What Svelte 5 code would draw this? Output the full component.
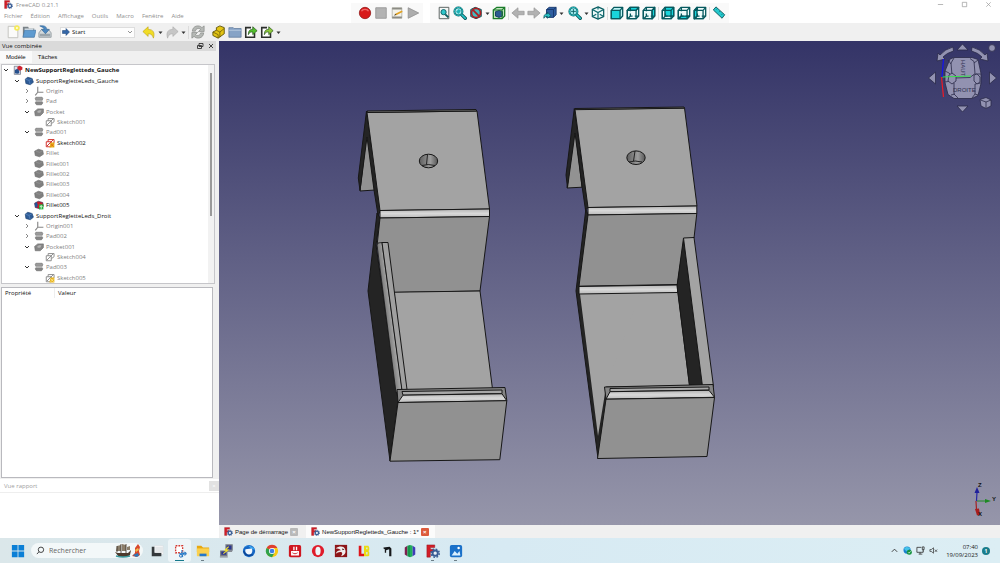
<script>
  const menus = ['Fichier', 'Édition', 'Affichage', 'Outils', 'Macro', 'Fenêtre', 'Aide'];

  const tree = [
    { level: 0, label: 'NewSupportRegletteds_Gauche', icon: 'doc', open: true, tone: 'bold' },
    { level: 1, label: 'SupportRegletteLeds_Gauche', icon: 'body', open: true, tone: 'on' },
    { level: 2, label: 'Origin', icon: 'origin', open: false },
    { level: 2, label: 'Pad', icon: 'pad', open: false },
    { level: 2, label: 'Pocket', icon: 'pocket', open: true },
    { level: 3, label: 'Sketch001', icon: 'sketch' },
    { level: 2, label: 'Pad001', icon: 'pad', open: true },
    { level: 3, label: 'Sketch002', icon: 'sketchRed', tone: 'on' },
    { level: 2, label: 'Fillet', icon: 'fillet' },
    { level: 2, label: 'Fillet001', icon: 'fillet' },
    { level: 2, label: 'Fillet002', icon: 'fillet' },
    { level: 2, label: 'Fillet003', icon: 'fillet' },
    { level: 2, label: 'Fillet004', icon: 'fillet' },
    { level: 2, label: 'Fillet005', icon: 'filletTip', tone: 'on' },
    { level: 1, label: 'SupportRegletteLeds_Droit', icon: 'body', open: true, tone: 'on' },
    { level: 2, label: 'Origin001', icon: 'origin', open: false },
    { level: 2, label: 'Pad002', icon: 'pad', open: false },
    { level: 2, label: 'Pocket001', icon: 'pocket', open: true },
    { level: 3, label: 'Sketch004', icon: 'sketch' },
    { level: 2, label: 'Pad003', icon: 'pad', open: true },
    { level: 3, label: 'Sketch005', icon: 'sketchWarn' }
  ];

  const macroTools = [
    ['record', 'Enregistrer la macro'],
    ['stop', 'Arrêter'],
    ['macroEdit', 'Macros'],
    ['play', 'Exécuter la macro']
  ];

  const viewTools = [
    ['fitAll', 'Tout afficher'], ['fitSel', 'Afficher la sélection'], ['drawStyle', 'Style de représentation'], ['caret'],
    ['bbox', 'Boîte englobante'], ['sep'], ['back', 'Précédent'], ['forward', 'Suivant'],
    ['link', 'Aller à l’objet lié'], ['caret'], ['gap'], ['zoom', 'Zoom'], ['caret'],
    ['iso', 'Isométrique'], ['sep'],
    ['front', 'Face'], ['top', 'Dessus'], ['right', 'Droite'], ['sep'],
    ['rear', 'Arrière'], ['bottom', 'Dessous'], ['left', 'Gauche'], ['sep'], ['measure', 'Mesurer']
  ];

  const apps = [
    ['taskview', 'Vue des tâches'], ['snip', 'Capture'], ['files', 'Explorateur'], ['putty', 'PuTTY'],
    ['thunderbird', 'Thunderbird'], ['chrome', 'Chrome'], ['redapp', 'Disque'], ['opera', 'Opera'],
    ['dragon', 'Dragon'], ['l8', 'LB'], ['hook', 'Cura'], ['hex', 'Anneaux'],
    ['freecad', 'FreeCAD'], ['photos', 'Photos']
  ];
</script>

{#snippet cube(kind)}
  <g fill="none" stroke="#075a5f" stroke-width="1.500" stroke-linejoin="round">
    {#if kind === 'front'}
      <path d="M1.500 5l3-3.500h10v10l-3 3h-10z" fill="#b9f2f3" />
      <path d="M1.500 5h10v9.500h-10z" fill="#19d5dc" />
      <path d="M11.500 5l3-3.500" />
    {:else}
      <path d="M1.500 5l3-3.500h10v10l-3 3h-10z" fill="#effbfb" />
      {#if kind === 'top'}<path d="M1.500 5l3-3.500h10l-3 3.500z" fill="#19d5dc" />{/if}
      {#if kind === 'right'}<path d="M11.500 5l3-3.500v10l-3 3z" fill="#19d5dc" />{/if}
      {#if kind === 'rear'}<path d="M4.500 1.500h10v10h-10z" fill="#19d5dc" />{/if}
      {#if kind === 'bottom'}<path d="M1.500 14.500l3-3h10l-3 3z" fill="#19d5dc" />{/if}
      {#if kind === 'left'}<path d="M1.500 5l3-3.500v10l-3 3z" fill="#19d5dc" />{/if}
      <path d="M1.500 5h10v9.500h-10zM11.500 5l3-3.500M5 2v4M5 8.500v3h2.500M10 11.500h4M5 11.500l-3 3" />
    {/if}
  </g>
{/snippet}

{#snippet lens()}
  <path d="M9.500 9.500l4.500 4.500" stroke="#0b5558" stroke-width="3.800" stroke-linecap="round" />
  <path d="M9.500 9.500l4.500 4.500" stroke="#28c5c9" stroke-width="2" stroke-linecap="round" />
  <circle cx="6.200" cy="6.200" r="4.600" fill="#9fe9ec" stroke="#0b6165" stroke-width="2.200" />
  <circle cx="6.200" cy="6.200" r="4.600" fill="none" stroke="#2cc3c7" stroke-width="1" />
{/snippet}

{#snippet icon(name)}
  <svg class="ico" viewBox="0 0 16 16" fill="none" aria-hidden="true">
    {#if name === 'freecad'}
      <path d="M1 1h9v3H5v2h4v3H5v6H1z" fill="#d21d27" stroke="#8e1119" stroke-width=".5" />
      <circle cx="10.500" cy="10.500" r="3" fill="#e9eef5" stroke="#3a5d95" stroke-width="2.200" />
      <circle cx="10.500" cy="10.500" r="4.700" stroke="#3a5d95" stroke-width="1.600" stroke-dasharray="2 1.690" />
    {:else if name === 'new'}
      <path d="M2.500 1.500h11v13h-11z" fill="#fbfbfa" stroke="#b9b9b4" stroke-width=".9" />
      <circle cx="12.500" cy="3.500" r="3.200" fill="#f5ea5b" />
      <circle cx="12.500" cy="3.500" r="1.200" fill="#fffde0" />
    {:else if name === 'open'}
      <path d="M1 2h6l1 2h6v10H1z" fill="#7a8288" />
      <path d="M3 4h10v6H3z" fill="#dfe6ea" />
      <path d="M1 14L3 6h13l-2 8z" fill="#5f9bd0" stroke="#3e73a5" stroke-width=".7" />
    {:else if name === 'save'}
      <path d="M1 9l3-4h8l3 4v5H1z" fill="#d4d9dc" stroke="#7c868c" stroke-width=".8" />
      <path d="M2 10h12v3H2z" fill="#9aa4ab" />
      <path d="M2 1c5-1 8 1 8 4h3L8.500 10 4 5h3C7 3 4 2 2 1z" fill="#4c87bf" stroke="#285e92" stroke-width=".6" />
    {:else if name === 'start'}
      <path d="M1 5h7V1l7 7-7 7v-4H1z" fill="#3467a8" stroke="#173f70" />
    {:else if name === 'undo'}
      <path d="M7 2v3c6 0 8 4 6 10-1-4-3-5-6-5v3L1 7.500z" fill="#f1dc25" stroke="#bda30f" stroke-width=".7" />
    {:else if name === 'redo'}
      <path d="M9 2v3C3 5 1 9 3 15c1-4 3-5 6-5v3l6-5.500z" fill="#c6c6c6" stroke="#a9a9a9" stroke-width=".7" />
    {:else if name === 'refresh'}
      <path d="M1.500 7C2 .5 9.500-.5 12.500 3L15 1v6.500H8.500L11 5C9 3 5.500 4 5 7z" fill="#b5b8b5" stroke="#868986" stroke-width=".8" />
      <path d="M14.500 9c-.5 6.500-8 7.500-11 4L1 15V8.500h6.500L5 11c2 2 5.500 1 6-2z" fill="#b5b8b5" stroke="#868986" stroke-width=".8" />
    {:else if name === 'part'}
      <path d="M1 8l4-2V3l4-2 5 2v7l-7 5-6-3z" fill="#e3c414" stroke="#5e5208" />
      <path d="M5 6l4 2v6M9 8l5-4M1 8l6 3v4" stroke="#5e5208" stroke-width=".8" />
    {:else if name === 'group'}
      <path d="M1 3h5l1 1h8v10H1z" fill="#86a3c6" stroke="#5a7699" stroke-width=".8" />
      <path d="M1 6h14" stroke="#b9cbe0" />
    {:else if name === 'export' || name === 'export2'}
      <path d="M8 3H2v11h10V9" fill="#fff" stroke="#2c2f2c" stroke-width="1.800" />
      <path d="M5 11c0-5 2-6 5-6V2l5 4.500L10 11V8c-2 0-4 0-5 3z" fill={name === 'export' ? '#52bf2c' : '#8fc93c'} stroke="#25511a" stroke-width=".8" />
    {:else if name === 'record'}
      <circle cx="8" cy="8" r="6.500" fill="#d81a1a" stroke="#8a0b0b" stroke-width=".8" />
      <path d="M4 6c1-3 7-3 8 0" stroke="#ee6a6a" stroke-width="1.400" />
    {:else if name === 'stop'}
      <path d="M2 2h12v12H2z" fill="#b3b3b3" stroke="#989898" />
    {:else if name === 'macroEdit'}
      <path d="M2.500 2h11v12h-11z" fill="#f3f2ea" stroke="#a6a69c" stroke-width=".8" />
      <path d="M2.500 2h11v2h-11zM2.500 12h11v2h-11z" fill="#8b8b84" />
      <path d="M6 10l8-4" stroke="#e3a220" stroke-width="2" /><path d="M5 10.500l2-1" stroke="#333" />
    {:else if name === 'play'}
      <path d="M2.500 2l12 6-12 6z" fill="#adadad" stroke="#949494" />
    {:else if name === 'fitAll'}
      <path d="M2.500 1.500h11v13h-11z" fill="#f4f6f5" stroke="#4b5451" />
      <circle cx="7.500" cy="7" r="3" fill="#2fc6ca" stroke="#0a5b60" /><path d="M9.500 9.500l3.500 3.500" stroke="#0a5b60" stroke-width="2.200" />
    {:else if name === 'fitSel' || name === 'zoom'}
      {@render lens()}
      {#if name === 'fitSel'}<path d="M3.500 6.500l3-3 2.500 2-2.500 3.500z" fill="#20b2b7" />{:else}<path d="M3.500 6.200h5.500M6.200 3.500V9" stroke="#0b6165" />{/if}
    {:else if name === 'drawStyle'}
      <path d="M2 4l5-2.500L14 4v8l-6 2.500L2 12z" fill="#41bcc0" stroke="#083f42" />
      <circle cx="8" cy="8" r="5.200" stroke="#b01e22" stroke-width="2" /><path d="M4.500 4.500l7 7" stroke="#b01e22" stroke-width="2" />
    {:else if name === 'bbox'}
      <path d="M1.500 4.500l4-3h9v10l-3 3h-10z" fill="#bfe3bb" stroke="#1b7c2a" stroke-width="1.500" />
      <path d="M4 6.500L8 5l4 1.500v5L8 13l-4-1.500z" fill="#2b5b92" stroke="#10325b" /><path d="M11.500 5v9M2 4.500h9.500l3-3" stroke="#1b7c2a" stroke-width="1.200" />
    {:else if name === 'back'}
      <path d="M15 6v4H8v4L1 8l7-6v4z" fill="#b2b2b2" stroke="#979797" stroke-width=".8" />
    {:else if name === 'forward'}
      <path d="M1 6v4h7v4l7-6-7-6v4z" fill="#b2b2b2" stroke="#979797" stroke-width=".8" />
    {:else if name === 'link'}
      <path d="M4 4l3-2.500h8V10l-3 3H4z" fill="#2f5da0" stroke="#15366b" /><path d="M4 4h8v9M12 4l3-2.500" stroke="#15366b" />
      <path d="M1 14c0-4 1-5 4-5V7l4 4-4 3v-2c-2 0-3 0-4 2z" fill="#27bec3" stroke="#075055" stroke-width=".8" />
    {:else if name === 'iso'}
      <path d="M8 1l6.500 3v8L8 15l-6.500-3V4z" fill="#eefafa" stroke="#075a5f" stroke-width="1.400" />
      <path d="M1.500 4L8 7.500 14.500 4M8 1v3M8 7v8M1.500 12L6 9.500M14.500 12L10 9.500" stroke="#0c6b70" stroke-width="1.400" />
    {:else if name === 'measure'}
      <path d="M1.500 4.500l3-3.500 10 9-3 4z" fill="#24c9ce" stroke="#075055" /><path d="M6 3L5 4M9 6L8 7M12 9l-1 1" stroke="#075055" stroke-width=".8" />
    {:else if name === 'doc'}
      <path d="M2 2h10v13H2z" fill="#dfe3ec" stroke="#5b6272" /><path d="M7 3l3-2 5 2v4l-4 2-4-2z" fill="#cf2330" /><path d="M3 8l4-2 3 3v4l-3 1-4-1z" fill="#27518c" />
    {:else if name === 'body'}
      <path d="M2 5l4-3 7 2 2 6-5 4-7-2z" fill="#2e5c97" stroke="#15396a" /><path d="M2 5l6 2 5-3M8 7l2 7" stroke="#6f9bd0" stroke-width=".8" />
    {:else if name === 'origin'}
      <path d="M6 1v9h9M6 10l-4 5" stroke="#858585" stroke-width="1.800" />
    {:else if name === 'pad'}
      <path d="M3 2h10l1 2-1 3H3L2 4z" fill="#9a9a9a" stroke="#6f6f6f" /><path d="M3 9h10l1 2-2 3H4l-2-3z" fill="#868686" stroke="#6a6a6a" /><path d="M3 8h10" stroke="#ddd" />
    {:else if name === 'pocket'}
      <path d="M1 7l5-4h9v6l-5 5H2z" fill="#858585" stroke="#6b6b6b" /><path d="M5 7l3-2h4l-2 4H6z" fill="#b2b2b2" />
    {:else if name === 'fillet'}
      <path d="M1 5l6-3 7 2 1 6-6 4-7-2z" fill="#7f7f7f" stroke="#6c6c6c" /><path d="M3 5l6 2 5-3" stroke="#999" />
    {:else if name === 'filletTip'}
      <path d="M1 5l6-3 7 2 1 6-6 4-7-2z" fill="#c41f2b" stroke="#3a2a55" /><path d="M1 6l3-3 2 4-1 5-3-1z" fill="#22569a" /><path d="M8 7h7v8H8z" fill="#25b33b" /><path d="M11.500 14V9M9.500 11l2-2 2 2" stroke="#fff" stroke-width="1.300" />
    {:else if name.startsWith('sketch')}
      <path d="M2 6h8v8H2zM5 6V2.500h9.500v5l-4 3M3 13L13 3" stroke={name === 'sketchRed' ? '#cf2a25' : '#8a8a8a'} stroke-width="1.500" />
      {#if name !== 'sketch'}<path d="M9 7h6v8H7z" fill="#e8b31d" /><path d="M9 9l5 5M14 9l-5 5" stroke={name === 'sketchRed' ? '#e05a10' : '#fff3b0'} />{/if}
    {:else if name === 'taskview'}
      <path d="M5 2h10v10H5z" fill="#fff" stroke="#d5d9dc" stroke-width=".6" /><path d="M2 3h3v7h8v4H2z" fill="#34383b" /><path d="M6 3h9v7H6z" fill="#e4e7e9" />
    {:else if name === 'snip'}
      <path d="M3 2h8v8H3z" fill="#fff" stroke="#d43a32" stroke-width="1.500" stroke-dasharray="2 1.200" />
      <path d="M10 7l1 8M7 11h8" stroke="#3a8fd6" stroke-width="1.400" /><circle cx="9" cy="13.500" r="1.600" stroke="#1a65b3" /><circle cx="13.500" cy="11" r="1.600" stroke="#1a65b3" />
    {:else if name === 'files'}
      <path d="M1 2h5l2 2h7v5H1z" fill="#e8a70f" /><path d="M1 5h14v9H1z" fill="#fbd04e" /><path d="M4 11h8v3H4z" fill="#2477cb" />
    {:else if name === 'putty'}
      <path d="M8 1h7v6H8zM2 8h7v5H2z" fill="#2a3590" stroke="#777b82" stroke-width="1.400" /><path d="M8 8h7v1H8zM1 14h9v1.500H1z" fill="#878b92" /><path d="M11 3L7 7h3l-5 4" stroke="#f4e22a" stroke-width="1.300" />
    {:else if name === 'thunderbird'}
      <circle cx="8" cy="8" r="7" fill="#1667c5" /><path d="M2 4c4-4 11-2 13 3-2-1-3-1-4-1L7 2z" fill="#3aa4ee" /><path d="M4 6l7-1c2 3 0 7-3 7S3 9 4 6z" fill="#f1f7fd" /><path d="M2 8c1 5 6 6 10 4" stroke="#0d4490" stroke-width="1.500" />
    {:else if name === 'chrome'}
      <circle cx="8" cy="8" r="7" fill="#f8c915" /><path d="M8 8L1.900 4.500A7 7 0 0 1 14.100 4.500H8z" fill="#df3f32" /><path d="M8 8L1.900 4.500A7 7 0 0 0 8 15l3-5.200z" fill="#30a24c" /><circle cx="8" cy="8" r="3.500" fill="#fff" /><circle cx="8" cy="8" r="2.700" fill="#3d7ee8" />
    {:else if name === 'redapp'}
      <rect x="1" y="1" width="14" height="14" rx="2" fill="#cf1620" /><path d="M3.500 8h9v5h-9zM6 3h1.500v4H6zM9 3h1.500v4H9z" fill="#fff" /><path d="M5 10c2 1.500 4 1.500 6 0" stroke="#cf1620" />
    {:else if name === 'opera'}
      <ellipse cx="8" cy="8" rx="7" ry="7" fill="#df1c2b" /><ellipse cx="8" cy="8" rx="3" ry="4.800" fill="#eef6f8" />
    {:else if name === 'dragon'}
      <path d="M1 1h14v14H1z" fill="#8d1518" /><path d="M2 5c4-3 10-3 11 2 1 4-2 6-5 7 2-3 2-5-1-5-2 0-3 1-5 2 1-3 3-4 6-4-2-2-4-2-6-2z" fill="#f1eded" /><path d="M9 5l3 1-2 1z" fill="#37090a" />
    {:else if name === 'l8'}
      <path d="M2 2h3v9h3v3H2z" fill="#df1519" /><path d="M8 2h5l1 2v3l-1 1 1 1v4l-1 1H8zm2.500 2v2H12V4zm0 5v3H12V9z" fill="#eadb12" fill-rule="evenodd" />
    {:else if name === 'hook'}
      <path d="M4 4l7-1 2 2v9h-2.500V6L7 7v3H5.500V6L4 5z" fill="#17191b" />
    {:else if name === 'hex'}
      <path d="M2 4l3-2v12l-3-2z" fill="#7d1f4f" /><path d="M5 2l3-1v14l-3-1z" fill="#15974c" /><path d="M8 1l3 1v12l-3 1z" fill="#22ad5c" /><path d="M11 2l3 2v8l-3 2z" fill="#3f3bb8" />
    {:else if name === 'photos'}
      <rect x="1" y="1" width="14" height="14" rx="2" fill="#1b71c9" /><path d="M3 13l3.500-5 3 3L12 8l1 5z" fill="#d8efff" /><circle cx="11" cy="4.500" r="1.400" fill="#fff" />
    {:else}
      {@render cube(name)}
    {/if}
  </svg>
{/snippet}

{#snippet caret()}
  <svg class="caret" viewBox="0 0 7 7" aria-hidden="true"><path d="M1.500 2.500h4l-2 2.500z" fill="#333" /></svg>
{/snippet}

{#snippet tool(name, label)}
  {#if name === 'caret'}{@render caret()}
  {:else if name === 'sep'}<span class="sep"></span>
  {:else if name === 'gap'}<span class="gap"></span>
  {:else}<button class="tool" aria-label={label}>{@render icon(name)}</button>{/if}
{/snippet}

<div class="window">
  <header>
    <div class="caption">
      <div class="title">{@render icon('freecad')}<span>FreeCAD 0.21.1</span></div>
      <nav>
        {#each menus as m}<button>{m}</button>{/each}
      </nav>
    </div>
    <div class="floating">
      <i class="grip"></i>
      {#each macroTools as [n, l]}{@render tool(n, l)}{/each}
    </div>
    <div class="floating">
      <i class="grip"></i>
      {#each viewTools as [n, l]}{@render tool(n, l)}{/each}
    </div>
    <div class="winctl">
      <button aria-label="Réduire"><svg viewBox="0 0 8 8"><path d="M1 4h6" /></svg></button>
      <button aria-label="Agrandir"><svg viewBox="0 0 8 8"><path d="M1.500 1.500h5v5h-5z" /></svg></button>
      <button aria-label="Fermer"><svg viewBox="0 0 8 8"><path d="M1.500 1.500l5 5M6.500 1.500l-5 5" /></svg></button>
    </div>
  </header>

  <div class="toolbar">
    <i class="grip"></i>
    {@render tool('new', 'Nouveau')}{@render tool('open', 'Ouvrir')}{@render tool('save', 'Enregistrer')}
    <i class="grip"></i>
    <label class="bench">
      {@render icon('start')}
      <select aria-label="Atelier"><option>Start</option></select>
      <svg class="down" viewBox="0 0 6 6" aria-hidden="true"><path d="M1 2l2 2 2-2" fill="none" stroke="#777" stroke-width=".8" /></svg>
    </label>
    <i class="grip"></i>
    {@render tool('undo', 'Annuler')}{@render caret()}
    {@render tool('redo', 'Rétablir')}{@render caret()}<span class="sep"></span>
    {@render tool('refresh', 'Rafraîchir')}
    <i class="grip"></i>
    {@render tool('part', 'Pièce')}{@render tool('group', 'Groupe')}{@render tool('export', 'Lien')}{@render tool('export2', 'Lien relatif')}{@render caret()}
  </div>

  <main>
    <aside>
      <section class="dock">
        <div class="dockhead">
          <span>Vue combinée</span>
          <button aria-label="Détacher"><svg viewBox="0 0 8 8"><path d="M3 1.500h4v3H3zM1.500 3.500h4v3h-4z" /></svg></button>
          <button aria-label="Fermer le panneau"><svg viewBox="0 0 8 8"><path d="M2 2l4 4M6 2L2 6" /></svg></button>
        </div>
        <div class="tabs">
          <button class="active">Modèle</button><button>Tâches</button>
        </div>
        <div class="treebox">
          <ul>
            {#each tree as row}
              <li class={row.tone ?? 'off'} style:padding-left="{Math.round(row.level * 10.5)}px">
                <svg class="chev" viewBox="0 0 8 8" aria-hidden="true">
                  {#if row.open === true}<path d="M2 3l2 2 2-2" stroke="#333" />{:else if row.open === false}<path d="M3 2l2 2-2 2" stroke="#888" />{/if}
                </svg>
                {@render icon(row.icon)}
                <span>{row.label}</span>
              </li>
            {/each}
          </ul>
          <i class="scroll"></i>
        </div>
        <div class="props">
          <table>
            <thead><tr><th>Propriété</th><th>Valeur</th></tr></thead>
          </table>
        </div>
      </section>
      <section class="report">
        <div><span>Vue rapport</span><button aria-label="Fermer le rapport">×</button></div>
      </section>
    </aside>

    <section class="stage">
      <div class="view">
        <svg class="scene" viewBox="219 41 781 484" preserveAspectRatio="xMidYMid slice" role="img" aria-label="Vue 3D">
          <defs>
            <linearGradient id="bevel" x1="0" y1="0" x2="0" y2="1"><stop offset="0" stop-color="#b4b4b4" /><stop offset=".5" stop-color="#d8d8d8" /><stop offset="1" stop-color="#b9b9b9" /></linearGradient>
            <linearGradient id="bore"><stop offset="0" stop-color="#5e5e5e" /><stop offset=".6" stop-color="#9d9d9d" /><stop offset="1" stop-color="#555" /></linearGradient>
            <linearGradient id="rail" gradientUnits="userSpaceOnUse" x1="386" y1="320" x2="394" y2="319"><stop offset="0" stop-color="#777" /><stop offset="1" stop-color="#b4b4b4" /></linearGradient>
          </defs>
          <g stroke="#171717" stroke-width="1" stroke-linejoin="round">
            <path fill="#929292" d="M367 130L360 191l15-1z" />
            <path fill="#242424" d="M366.500 111L358.300 178l1.700 12.500L367 137l7 53 4 25 3-5z" />
            <path fill="#242424" d="M377 213l3 5-4 27 22 155-8 61-22-170z" />
            <path fill="#a3a3a3" d="M367 112.500L477 111l12.500 98-109.500 1.500z" />
            <path fill="#777" d="M367 111l109-1.500.7 1.500-109 1.500z" />
            <path fill="url(#bevel)" d="M380 210.500L489.500 209v7.500L380 218z" />
            <path fill="#919191" d="M380 218l109.500-1.500L480 291l-86 1.500L377 246z" />
            <path fill="#a3a3a3" d="M394 292.200l86-1.200 12.500 98-87 2z" />
            <path fill="url(#rail)" stroke-width=".8" d="M377 245l1-2 4-.5 20 146-6 4z" />
            <path fill="#a0a0a0" d="M382 242.500h6l19 147-5 1z" />
            <path fill="#858585" d="M397 389.500l108-2 1.800 13L398 402.500z" />
            <path fill="#a8a8a8" d="M402 391.500l100-1.500v3.500l-99 1.700z" />
            <path fill="url(#bevel)" d="M403 395.200l99-1.400 4.800 7L398 402.500z" />
            <path fill="#919191" d="M398 402.500l108.800-1.800-7 59L390 461.200z" />
            <ellipse cx="428.500" cy="161" rx="9.200" ry="6.800" fill="url(#bore)" />
            <path fill="none" stroke-width=".9" d="M427.500 154.500l-1 10M422 165.500q6-2 13 0" />
          </g>
          <g stroke="#171717" stroke-width="1" stroke-linejoin="round">
            <path fill="#929292" d="M575 126l-8 62 15-.8z" />
            <path fill="#242424" d="M574.300 108.500L566 175l1.500 12.500L575 133l7 53 3.500 24 3-3z" />
            <path fill="#a3a3a3" d="M579 293.500l99-1.500 11.500 94-84 1-7.500 62z" />
            <path fill="#242424" d="M585.500 208l2.500 7-8.500 73 18.500 140 6.500-41 2.500 2-.5 10-8.500 59.500L576 291l9.500-79z" />
            <path fill="#a3a3a3" stroke="none" d="M580 294l60-1-34 94-8 49z" />
            <path fill="#a3a3a3" d="M575 109.500L684.500 108l12.500 98-109 1.500z" />
            <path fill="#777" d="M575 108.500L684 107l.5 1.200-109 1.500z" />
            <path fill="url(#bevel)" d="M588 207.500L696.800 206v7.500L588 215z" />
            <path fill="#919191" d="M588 215l108.800-1.500L694 238l-10 2-6.500 44.500-98.500 1.700z" />
            <path fill="url(#bevel)" d="M579 286.500l98.500-1.500v7.500l-98.500 1.500z" />
            <path fill="#242424" d="M683.500 238l-6.500 48 12.500 99h13z" />
            <path fill="#a3a3a3" d="M683.500 238l10.500-.5 19.500 149-11 0z" />
            <path fill="#858585" d="M604.500 387L713 384.500l1.500 13L606 399.500z" />
            <path fill="#a8a8a8" d="M610 388.500l99-1.500v3l-99 1.700z" />
            <path fill="url(#bevel)" d="M610 391.700l99-1.400 5.500 7L606 399.200z" />
            <path fill="#919191" d="M606 399.200l108.500-1.700-7.500 59-109.500 2z" />
            <ellipse cx="636" cy="157.700" rx="9.200" ry="6.800" fill="url(#bore)" />
            <path fill="none" stroke-width=".9" d="M635 151l-1.500 10M629 162q6-2 13 0" />
          </g>
        </svg>

        <svg class="navcube" viewBox="926 41 72 74" aria-hidden="true">
          <g fill="#9292b1" stroke="#292947" stroke-width=".8" stroke-linejoin="round">
            <path d="M962.500 44l5.500 6h-11zM962.500 112l5.500-6h-11zM928.500 78l7-6v12zM996.500 78l-7-6v12z" />
            <path d="M953 47l.5 4q-7 2-10.500 6l2 2-8 2 1-8 2 2q5-6 13-8zM972 47l-.5 4q7 2 10.500 6l-2 2 8 2-1-8-2 2q-5-6-13-8z" />
            <circle cx="992" cy="48" r="3.400" />
            <path d="M980 99.500l6-2 5 2.500v6l-5 2.500-5-2.500z" /><path d="M980.500 100l5.500 2 5-2M986 102v6" fill="none" />
            <path d="M950 59l4-1.500h18l6 2 3 14v10l-3 12-6 3h-18l-6-4-3-12V71z" />
            <path d="M954 58l-3 5 1 12 3 3 15-.500 5-4-1-12-4-3M948 60l3 4M978 60l-4 3M945 71l4 2 3 3M981 74h-6M945 82l6-1 3 2v11l4 4M981 83l-6 1v10l-3 4M951 95l4-1M978 95l-3-1" fill="none" />
            <path d="M949 75l3-2 4 3v5l-4 3-4-3zM974 75l3-1 3 3v5l-3 2-3-3z" />
          </g>
          <text x="0" y="0" transform="translate(961 60) rotate(90)" class="face">HAUT</text>
          <text x="953" y="92" class="face">DROITE</text>
          <path d="M942 77l29-1" stroke="#35e04a" /><path d="M942 77l1.500-18" stroke="#1212f2" stroke-width="1.200" /><path d="M941.500 77l2 20" stroke="#f01a24" stroke-width="1.200" />
        </svg>

        <svg class="axis" viewBox="972 480 26 38" aria-hidden="true">
          <path d="M976.500 501l.500-9" stroke="#2525a5" stroke-width="1.200" /><path d="M977 487l2.500 6h-5z" fill="#20209b" />
          <path d="M977 501h9" stroke="#238a28" /><path d="M985 499l6 2-6 2z" fill="#1d8a23" />
          <path d="M976 501l.500 9" stroke="#a32222" stroke-width="1.200" /><path d="M975 509l4-.5 1 6-3 1z" fill="#a81d1d" />
          <text x="978" y="487">Z</text><text x="992" y="501">Y</text><text x="978" y="516">X</text>
        </svg>
      </div>

      <div class="docs">
        <div class="doctab">{@render icon('freecad')}<span>Page de démarrage</span><button class="x grey" aria-label="Fermer Page de démarrage">×</button></div>
        <div class="doctab current">{@render icon('freecad')}<span>NewSupportRegletteds_Gauche : 1*</span><button class="x red" aria-label="Fermer le document">×</button></div>
      </div>
    </section>
  </main>

  <footer>
    <button class="app" aria-label="Démarrer">
      <svg class="ico" viewBox="0 0 16 16"><path d="M1 1h6.500v6.500H1zM8.500 1H15v6.500H8.500zM1 8.500h6.500V15H1zM8.500 8.500H15V15H8.500z" fill="#0b7fd6" /></svg>
    </button>
    <label class="search">
      <svg viewBox="0 0 10 10" aria-hidden="true"><circle cx="5.500" cy="4.200" r="3" fill="none" stroke="#333" stroke-width="1" /><path d="M3.300 6.400L1 9" stroke="#333" /></svg>
      <input type="search" placeholder="Rechercher" aria-label="Rechercher" />
      <svg class="ship" viewBox="0 0 28 15" aria-hidden="true">
        <path d="M2 9l3 1h10l3-3-1 5-3 2H6z" fill="#4d3a2c" /><path d="M4 3l4-1v6H3zM9 1l4 1v6H9zM14 4l3-1v4h-3z" fill="#8b7e6b" /><path d="M8 1v9M13 1v9M4 3v6" stroke="#33291f" stroke-width=".8" /><path d="M3 13q7 2 14 0" stroke="#3d9a9e" stroke-width="1.500" fill="none" />
        <path d="M22 5l3-4 2 3-1 4 1 4-3 2-5-1 3-3z" fill="#d8482c" /><path d="M22 7l3-2 1 2-3 2z" fill="#f2b84b" /><path d="M20 12l5-2 1 3-3 1z" fill="#2f77b8" />
      </svg>
    </label>
    {#each apps as [n, l]}
      <button class="app" class:lit={n === 'snip'} class:running={['files', 'freecad', 'photos'].includes(n)} aria-label={l}>{@render icon(n)}</button>
    {/each}
    <div class="tray">
      <svg viewBox="0 0 10 10"><path d="M2 6.500l3-3 3 3" fill="none" stroke="#333" /></svg>
      <svg viewBox="0 0 10 10"><circle cx="4.500" cy="4.500" r="4" fill="#1a80ce" /><path d="M1 3c2-3 6-2 7 0L4 6z" fill="#45c3e8" /><circle cx="7" cy="7" r="2.800" fill="#15933e" /><path d="M5.700 7l1 1 1.700-2" stroke="#fff" stroke-width=".8" fill="none" /></svg>
      <svg viewBox="0 0 10 10"><path d="M6 1.500H1v5.500h7V5M3 9h4M4.500 7v2M7 1h2v3H7zM8 4v2" fill="none" stroke="#333" stroke-width=".9" /></svg>
      <svg viewBox="0 0 10 10"><path d="M1 4h1.500L5 2v6L2.500 6H1zM6.500 4l2.500 2.500M9 4L6.500 6.500" fill="none" stroke="#333" stroke-width=".8" /></svg>
      <div class="clock"><span>07:40</span><span>19/09/2023</span></div>
      <b>1</b>
    </div>
  </footer>
</div>

<style>
  :global(body) { margin: 0; }
  .window { min-height: 100vh; display: flex; flex-direction: column; background: #f0f0f0; color: #111; font: 6px/8px "Open Sans", "Noto Sans", sans-serif; overflow: hidden; }
  button, select, input { font: inherit; color: inherit; border: 0; padding: 0; margin: 0; background: none; outline: 0; }
  button { display: flex; align-items: center; justify-content: center; }
  svg { display: block; flex: none; }

  header { display: flex; height: 23px; background: #fff; }
  .caption { width: 351px; display: flex; flex-direction: column; color: #8f8f8f; }
  .title { display: flex; align-items: center; gap: 3px; height: 9px; padding-left: 4px; }
  .title .ico { width: 9px; height: 9px; }
  nav { display: flex; gap: 8px; height: 16px; padding-left: 4px; align-items: center; }
  .floating { display: flex; align-items: center; height: 20px; margin: 3px 7px 0 0; background: #f9f9f9; padding-right: 2px; }
  .floating .tool, .floating .grip { margin-bottom: 1px; }
  .grip { width: 3px; height: 13px; margin: 0 1px 0 2px; background: radial-gradient(circle, #b5b5b5 30%, transparent 40%) 0 0 / 2px 2px; opacity: .7; }
  .tool { width: 16px; height: 16px; }
  .tool .ico { width: 14px; height: 14px; }
  .caret { width: 7px; height: 7px; }
  .sep { width: 1px; height: 13px; margin: 0 1px; background: #dcdcdc; }
  .gap { width: 2px; }
  .winctl { display: flex; margin-left: auto; height: 8px; }
  .winctl button { width: 24px; height: 8px; }
  .winctl svg { width: 7px; height: 7px; fill: none; stroke: #999; stroke-width: .8; }

  .toolbar { display: flex; align-items: center; height: 18px; }
  .toolbar .grip { margin: 0 1px; }
  .bench { display: flex; align-items: center; width: 75px; height: 11px; border: 1px solid #ddd; background: #fdfdfd; box-sizing: border-box; margin: 0 1px 0 2px; padding: 0 1px; gap: 2px; }
  .bench .ico { width: 8px; height: 8px; }
  .bench select { appearance: none; flex: 1; min-width: 0; }
  .down { width: 6px; height: 6px; }

  main { flex: 1; display: flex; min-height: 0; }
  aside { width: 216px; display: flex; flex-direction: column; padding-right: 3px; }
  .dock { flex: 1; display: flex; flex-direction: column; }
  .dockhead { display: flex; align-items: center; gap: 3px; height: 10px; padding: 0 1px 0 2px; background: #dadada; }
  .dockhead span { flex: 1; }
  .dockhead svg { width: 8px; height: 8px; fill: none; stroke: #333; stroke-width: .9; }
  .tabs { display: flex; height: 12px; margin-bottom: 1px; font-family: "Liberation Sans", sans-serif; }
  .tabs button { padding: 0 6px; }
  .tabs .active { background: #fafafa; }
  .treebox { display: flex; height: 220px; margin: 0 1px; border: 1px solid #c6c6ca; box-sizing: border-box; background: #fff; }
  ul { flex: 1; margin: 0; padding: 0; list-style: none; display: grid; grid-template-rows: repeat(21, 1fr); }
  li { display: flex; align-items: center; min-height: 0; white-space: nowrap; }
  li .ico { width: 10px; height: 10px; margin: 0 2px 0 3px; }
  .chev { width: 8px; height: 8px; fill: none; stroke-width: 1; }
  .off { color: #808080; }
  .bold { font-weight: 700; }
  .scroll { width: 6px; background: linear-gradient(#9a9a9a, #9a9a9a) 2px 8px / 2px 143px no-repeat #f2f2f2; }
  .props { flex: 1; margin: 3px 3px 0 1px; border: 1px solid #b9b9be; background: #fff; }
  table { width: 100%; border-collapse: collapse; table-layout: fixed; }
  th { font-weight: 400; text-align: left; padding: 1px 3px; height: 8px; }
  th:first-child { width: 46px; border-right: 1px solid #eee; }
  .report { height: 59px; margin-top: 1px; background: #fff; color: #a0a0a0; margin-right: -3px; }
  .report div { display: flex; justify-content: space-between; align-items: center; height: 13px; padding-left: 4px; border-bottom: 1px solid #eee; }
  .report button { width: 10px; height: 10px; background: #e2e2e2; color: #fff; }

  .stage { flex: 1; min-width: 0; display: flex; flex-direction: column; }
  .view { flex: 1; position: relative; background: linear-gradient(#343467, #9696aa); }
  .scene { position: absolute; inset: 0; width: 100%; height: 100%; }
  .navcube { position: absolute; top: 0; right: 2px; width: 72px; height: 74px; }
  .face { font: 6px "Liberation Sans", sans-serif; fill: #30304f; }
  .axis { position: absolute; right: 2px; bottom: 7px; width: 26px; height: 38px; }
  .axis text { font: 700 6px "Liberation Sans", sans-serif; fill: #111; }
  .docs { display: flex; height: 13px; font-family: "Liberation Sans", sans-serif; }
  .doctab { display: flex; align-items: center; gap: 2px; padding: 0 6px 0 5px; }
  .doctab .ico { width: 9px; height: 9px; }
  .doctab.current { background: #fbfbfb; margin-left: 2px; }
  .x { width: 8px; height: 8px; color: #fff; font-weight: 700; border-radius: 1px; }
  .grey { background: #b9b9b9; }
  .red { background: #dc5a3c; }

  footer { display: flex; align-items: center; height: 25px; padding-left: 6px; background: linear-gradient(90deg, #dbe7ea, #d7eaf3 50%, #dceef4); }
  .app { position: relative; width: 23px; height: 23px; }
  .app .ico { width: 14px; height: 14px; }
  .lit { background: #edf5f8; border-radius: 3px; }
  .running::after, .lit::after { content: ""; position: absolute; bottom: 1px; left: 10px; width: 3px; height: 1px; background: #6e7f88; }
  .lit::after { left: 7px; width: 9px; background: #16798c; }
  .search { display: flex; align-items: center; gap: 4px; width: 112px; height: 15px; box-sizing: border-box; margin: 0 2px; padding: 0 2px 0 5px; border-radius: 8px; background: #f3f8f9; }
  .search svg { width: 9px; height: 9px; }
  .search input { flex: 1; min-width: 0; font-size: 7px; color: #555; appearance: none; }
  .search input::placeholder { color: #666; opacity: 1; }
  .search .ship { width: 28px; height: 15px; }
  .tray { display: flex; align-items: center; gap: 4px; margin-left: auto; padding-right: 10px; }
  .tray svg { width: 9px; height: 9px; }
  .clock { display: flex; flex-direction: column; align-items: flex-end; margin-left: 4px; color: #222; }
  .tray b { width: 8px; height: 8px; border-radius: 50%; background: #1a7d8b; color: #fff; text-align: center; font-size: 5px; }
</style>
